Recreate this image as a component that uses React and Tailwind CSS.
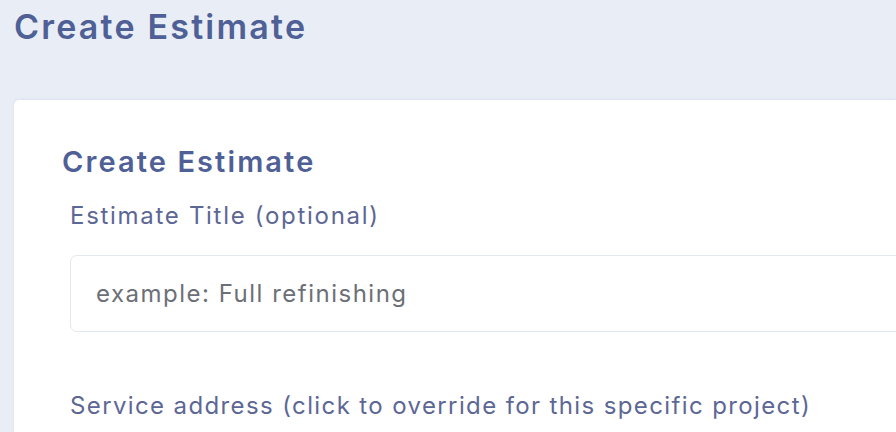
export default function App() {
  return (
    <div className="min-h-screen overflow-hidden bg-[#e9eef6] pl-[14px] pt-[7px] font-['Inter',sans-serif]">
      <h1 className="text-[34px] font-semibold leading-[40px] tracking-[2.2px] text-[#4f6097]">Create Estimate</h1>

      <section className="mt-[53px] min-h-[400px] rounded-l-[5px] bg-white pl-[48px] pt-[44px] shadow-[0_-1px_3px_rgba(120,140,180,0.12)]">
        <h2 className="text-[29px] font-semibold leading-[36px] tracking-[2.1px] text-[#4f6097]">Create Estimate</h2>

        <div className="ml-[8px]">
          <label className="mt-[20px] block text-[24px] leading-[32px] tracking-[1.7px] text-[#5d6795]">
            Estimate Title (optional)
          </label>
          <input
            type="text"
            placeholder="example: Full refinishing"
            className="mt-[23px] block h-[77px] w-[900px] rounded-[7px] border border-[#e3e7ee] bg-white pl-[25px] text-[24px] tracking-[1.5px] text-[#4b5563] outline-none placeholder:text-[#6b7077]"
          />

          <label className="mt-[58px] block text-[24px] leading-[32px] tracking-[1.38px] text-[#5d6795]">
            Service address (click to override for this specific project)
          </label>
        </div>
      </section>
    </div>
  );
}
